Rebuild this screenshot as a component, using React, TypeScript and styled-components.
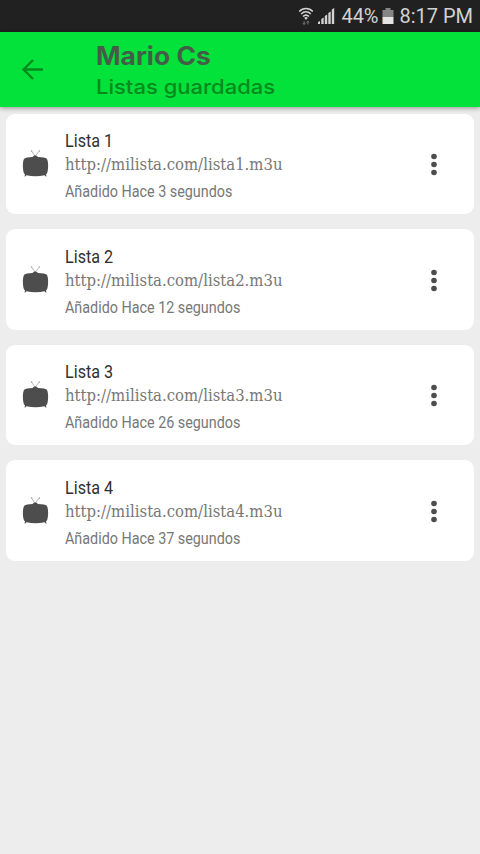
import React from 'react'
import styled, { createGlobalStyle } from 'styled-components'

const GlobalStyle = createGlobalStyle`
    *{
        box-sizing: border-box;
    }
    body{
        margin: 0;
        background-color: #ededed;
        font-family: Roboto, 'Liberation Sans', sans-serif;
    }
`

const Screen = styled.div`
    min-height: 854px;
    background-color: #ededed;
`

const StatusBar = styled.div`
    display: flex;
    align-items: center;
    justify-content: flex-end;
    gap: 4px;
    height: 32px;
    padding-right: 7px;
    background-color: #212121;
    color: #d2d2d2;
    font-size: 20px;
    line-height: 32px;
    white-space: nowrap;
    & svg{
        flex: none;
    }
`

const Battery = styled.span`
    width: 37px;
    margin-left: 2px;
`

const Clock = styled.span`
    margin-left: 1px;
`

const Header = styled.header`
    display: flex;
    height: 75px;
    background-color: #02e23b;
    box-shadow: 0 1px 5px #00000066;
`

const BackButton = styled.button`
    width: 96px;
    padding: 0 0 0 20px;
    border: none;
    background: none;
    text-align: left;
    line-height: 0;
    cursor: pointer;
`

const Titles = styled.div`
    padding-top: 9px;
    white-space: nowrap;
`

const Scaled = styled.span<{ $x: number }>`
    display: inline-block;
    transform: scaleX(${({ $x }) => $x});
    transform-origin: left center;
    white-space: nowrap;
`

const Title = styled.h1`
    margin: 0;
    color: #455c48;
    font-family: Inter, sans-serif;
    font-size: 25px;
    font-weight: 700;
    line-height: 30px;
`

const Subtitle = styled.h2`
    margin: 0;
    color: #078a1c;
    font-family: Inter, sans-serif;
    font-size: 20px;
    font-weight: 450;
    line-height: 32px;
`

const Lists = styled.main`
    display: flex;
    flex-direction: column;
    gap: 15.2px;
    padding: 7px 6px;
`

const Card = styled.article`
    display: flex;
    align-items: center;
    height: 100.3px;
    padding: 0 28px 0 16px;
    border-radius: 9px;
    background-color: white;
`

const Info = styled.div`
    flex: 1;
    margin-left: 16px;
    padding-top: 6px;
`

const Name = styled.div`
    height: 24px;
    color: #303030;
    font-size: 19px;
    line-height: 24px;
`

const Url = styled.div`
    height: 24px;
    color: #777777;
    font-family: 'DejaVu Serif', serif;
    font-size: 16px;
    line-height: 24px;
`

const Added = styled.div`
    height: 28px;
    color: #777777;
    font-size: 16px;
    line-height: 29px;
`

const MenuButton = styled.button`
    width: 24px;
    height: 24px;
    padding: 0;
    border: none;
    background: none;
    line-height: 0;
    cursor: pointer;
`

const WifiIcon = () => (
    <svg width="16" height="20" viewBox="0 0 16 20" fill="none" stroke="#d2d2d2" strokeWidth="1.5">
        <path d="M1.2 5.5C5 1.5 11 1.5 14.8 5.5M3.2 8C6 5 10 5 12.8 8M5 10.5C6.8 8.7 9.2 8.7 11 10.5" />
        <path d="M6.2 11.8Q8 10.4 9.8 11.8L8 14Z" fill="#d2d2d2" stroke="none" />
        <path d="M6.1 15v3.5M4.8 17l1.3 1.5L7.4 17M9.9 18.5V15M8.6 16.5L9.9 15l1.3 1.5" stroke="#747474" strokeWidth="1" />
    </svg>
)

const SignalIcon = () => (
    <svg width="17" height="18" viewBox="0 0 17 18" fill="#d2d2d2">
        <path d="M0 17v-2l2-1v3zM3.3 17v-5l2.4-1.5V17zM6.8 17V9l2.4-1.5V17zM10.3 17V6l2.4-1.5V17zM13.8 17V2.5L16.2 1v16z" />
    </svg>
)

const BatteryIcon = () => (
    <svg width="12" height="17" viewBox="0 0 12 17">
        <path d="M3.5 0h5v2h3v7H.5V2h3z" fill="#858585" />
        <path d="M.5 9h11v7H.5z" fill="#e4e4e4" />
    </svg>
)

const TvIcon = () => (
    <svg width="27" height="30" viewBox="0 0 27 30">
        <path d="M9.8 2.3L13 7.3L17 2.3" fill="none" stroke="#999" strokeWidth=".7" />
        <circle cx="9.6" cy="2" r=".7" fill="#999" />
        <circle cx="17.3" cy="2" r=".7" fill="#999" />
        <path d="M10.5 8Q13.2 5.2 16 8Q23 8.2 24.5 9.5Q26.2 11 26.1 17.5Q26 24 24 25.5L24.5 27.5H23.8L22.5 26.3Q13.5 28 4.5 26.3L3.2 27.5H2.5L3 25.5Q1 24 .9 17.5Q.8 11 2.5 9.5Q4 8.2 10.5 8Z" fill="#4d4d4d" />
    </svg>
)

const lists = [
    { id: 1, seconds: 3 },
    { id: 2, seconds: 12 },
    { id: 3, seconds: 26 },
    { id: 4, seconds: 37 },
]

const App = () => {
  return (
    <Screen>
        <GlobalStyle />
        <StatusBar>
            <WifiIcon />
            <SignalIcon />
            <Battery>44%</Battery>
            <BatteryIcon />
            <Clock>8:17 PM</Clock>
        </StatusBar>
        <Header>
            <BackButton aria-label="Volver">
                <svg width="24" height="24" viewBox="0 0 24 24" fill="none" stroke="#078a1c" strokeWidth="2.4">
                    <path d="M23 11.5H3.8M13 2L3.6 11.5L13 21" />
                </svg>
            </BackButton>
            <Titles>
                <Title><Scaled $x={1.055}>Mario Cs</Scaled></Title>
                <Subtitle><Scaled $x={1.1}>Listas guardadas</Scaled></Subtitle>
            </Titles>
        </Header>
        <Lists>
            {lists.map(({ id, seconds }) => (
                <Card key={id}>
                    <TvIcon />
                    <Info>
                        <Name><Scaled $x={0.85}>Lista {id}</Scaled></Name>
                        <Url><Scaled $x={0.93}>http://milista.com/lista{id}.m3u</Scaled></Url>
                        <Added><Scaled $x={0.896}>Añadido Hace {seconds} segundos</Scaled></Added>
                    </Info>
                    <MenuButton aria-label="Opciones">
                        <svg width="24" height="24" viewBox="0 0 24 24" fill="#4d4d4d">
                            <circle cx="12" cy="4.5" r="2.8" />
                            <circle cx="12" cy="12.5" r="2.8" />
                            <circle cx="12" cy="20.5" r="2.8" />
                        </svg>
                    </MenuButton>
                </Card>
            ))}
        </Lists>
    </Screen>
  )
}

export default App
